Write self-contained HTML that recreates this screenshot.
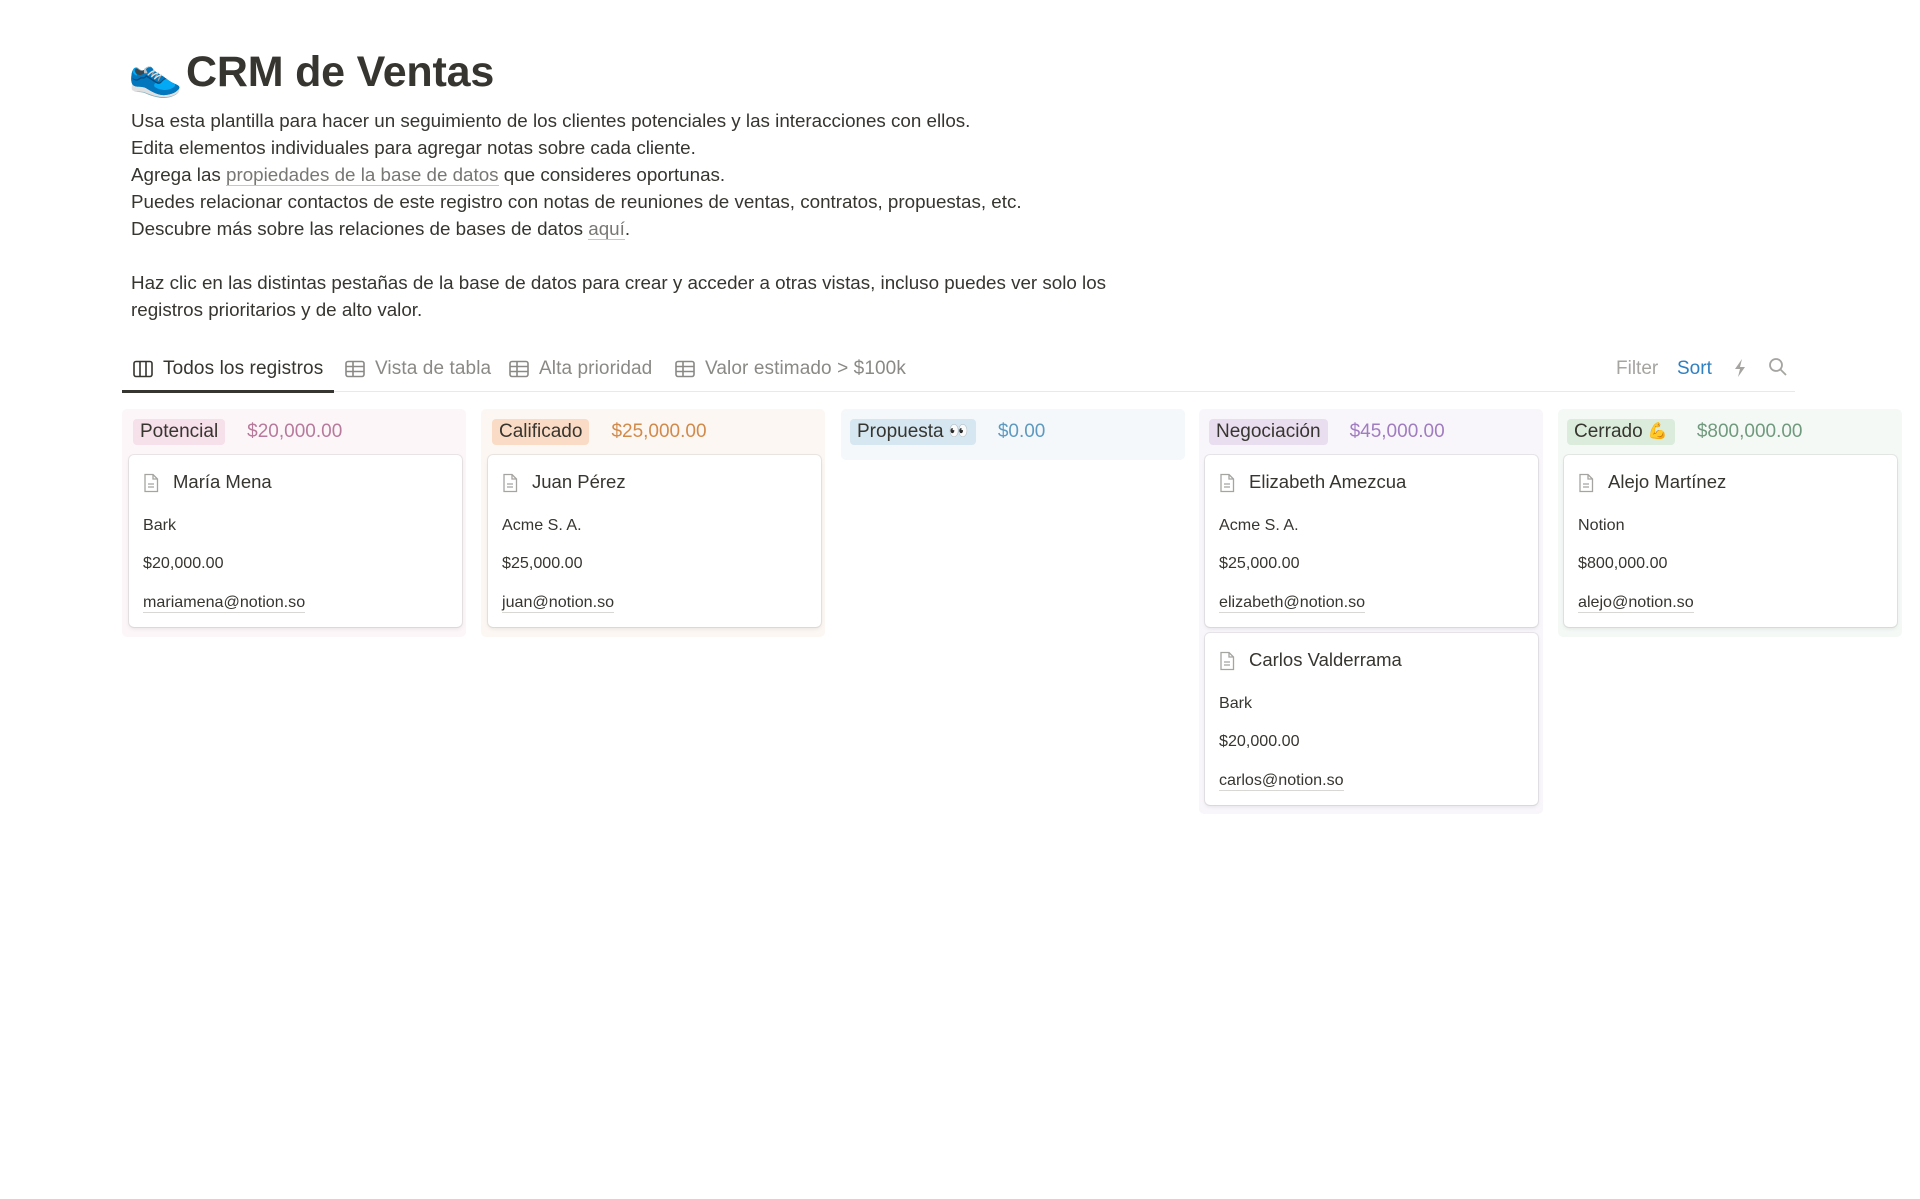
<!DOCTYPE html>
<html><head><meta charset="utf-8"><style>
*{margin:0;padding:0;box-sizing:border-box}
body{width:1920px;height:1199px;background:#fff;font-family:"Liberation Sans","Noto Sans CJK JP",sans-serif;color:#37352f;position:relative;overflow:hidden}
.a{position:absolute;white-space:nowrap}
h1{position:absolute;left:186px;top:48px;font-size:43px;font-weight:bold;color:#37352f;letter-spacing:-0.2px}
.p{position:absolute;left:131px;font-size:18.8px;line-height:27px}
.lk{color:#787774;border-bottom:1px solid #c8c7c4}
.tab{position:absolute;top:358px;font-size:19px;letter-spacing:0.1px;color:#8a8985;display:flex;align-items:center;gap:10px}
.col{position:absolute;top:409px;width:344px;border-radius:5px}
.hd{position:absolute;top:419px;height:26px;display:flex;align-items:center;gap:22px;font-size:19px;line-height:26px}
.tag{display:inline-block;height:26px;line-height:26px;padding:0 7px;border-radius:4px;color:#37352f;overflow:hidden}
.e{font-size:16px;line-height:26px;vertical-align:top}
.card{position:absolute;width:333px;height:172px;background:#fff;border-radius:5px;box-shadow:0 0 0 1px rgba(15,15,15,.07),0 2px 4px rgba(15,15,15,.08)}
.card .t{position:absolute;left:44px;top:16px;font-size:18.5px;color:#37352f}
.card .ic{position:absolute;left:14px;top:18px}
.card .r{position:absolute;left:14px;font-size:16.1px;color:#37352f}
.em{border-bottom:1px solid #d8d7d4}
</style></head><body>
<div class="a" style="left:128px;top:48px;font-size:44px">👟</div>
<h1>CRM de Ventas</h1>
<div class="p" style="top:107px">Usa esta plantilla para hacer un seguimiento de los clientes potenciales y las interacciones con ellos.<br>Edita elementos individuales para agregar notas sobre cada cliente.<br>Agrega las <span class="lk">propiedades de la base de datos</span> que consideres oportunas.<br>Puedes relacionar contactos de este registro con notas de reuniones de ventas, contratos, propuestas, etc.<br>Descubre más sobre las relaciones de bases de datos <span class="lk">aquí</span>.<br><br>Haz clic en las distintas pestañas de la base de datos para crear y acceder a otras vistas, incluso puedes ver solo los<br>registros prioritarios y de alto valor.</div>

<div class="tab" style="left:133px;color:#37352f"><svg width="20" height="18" viewBox="0 0 20 18"><rect x="1" y="1.5" width="18" height="15" rx="2" fill="none" stroke="#37352f" stroke-width="1.6"/><path d="M7 2v14M13 2v14" stroke="#37352f" stroke-width="1.6"/></svg>Todos los registros</div>
<div class="tab" style="left:345px"><svg width="20" height="18" viewBox="0 0 20 18"><rect x="1" y="1.5" width="18" height="15" rx="2" fill="none" stroke="#8a8985" stroke-width="1.6"/><path d="M1 6.5h18M1 11.5h18M8 2v14" stroke="#8a8985" stroke-width="1.6"/></svg>Vista de tabla</div>
<div class="tab" style="left:509px"><svg width="20" height="18" viewBox="0 0 20 18"><rect x="1" y="1.5" width="18" height="15" rx="2" fill="none" stroke="#8a8985" stroke-width="1.6"/><path d="M1 6.5h18M1 11.5h18M8 2v14" stroke="#8a8985" stroke-width="1.6"/></svg>Alta prioridad</div>
<div class="tab" style="left:675px"><svg width="20" height="18" viewBox="0 0 20 18"><rect x="1" y="1.5" width="18" height="15" rx="2" fill="none" stroke="#8a8985" stroke-width="1.6"/><path d="M1 6.5h18M1 11.5h18M8 2v14" stroke="#8a8985" stroke-width="1.6"/></svg>Valor estimado &gt; $100k</div>
<div class="a" style="left:122px;top:391px;width:1673px;height:1px;background:#e9e9e7"></div>
<div class="a" style="left:122px;top:390px;width:212px;height:3px;background:#37352f"></div>
<div class="a" style="left:1616px;top:358px;font-size:19px;color:#a5a4a0">Filter</div>
<div class="a" style="left:1677px;top:358px;font-size:19px;color:#2f80c2">Sort</div>
<svg class="a" style="left:1732px;top:358px" width="16" height="20" viewBox="0 0 16 20"><path d="M10 1L3 11h5l-2 8 7-10H8z" fill="#a5a4a0"/></svg>
<svg class="a" style="left:1768px;top:357px" width="20" height="20" viewBox="0 0 20 20"><circle cx="8" cy="8" r="6" fill="none" stroke="#a5a4a0" stroke-width="1.8"/><path d="M12.5 12.5L18 18" stroke="#a5a4a0" stroke-width="1.8"/></svg>

<div class="col" style="left:122px;height:228px;background:#fcf6f9"></div>
<div class="col" style="left:481px;height:228px;background:#fcf7f2"></div>
<div class="col" style="left:841px;height:51px;background:#f4f8fb"></div>
<div class="col" style="left:1199px;height:405px;background:#f9f6fb"></div>
<div class="col" style="left:1558px;height:228px;background:#f5f9f6"></div>

<div class="hd" style="left:133px"><span class="tag" style="background:#f6e0ea">Potencial</span><span style="color:#b77a9b">$20,000.00</span></div>
<div class="hd" style="left:492px"><span class="tag" style="background:#fadcc6">Calificado</span><span style="color:#d28a4a">$25,000.00</span></div>
<div class="hd" style="left:850px"><span class="tag" style="background:#d6e7f1">Propuesta <span class="e">👀</span></span><span style="color:#5e9ac0">$0.00</span></div>
<div class="hd" style="left:1209px"><span class="tag" style="background:#e9def0">Negociación</span><span style="color:#a07cc0">$45,000.00</span></div>
<div class="hd" style="left:1567px"><span class="tag" style="background:#dbecdc">Cerrado <span class="e">💪</span></span><span style="color:#709a7d">$800,000.00</span></div>

<svg width="0" height="0" style="position:absolute"><defs><symbol id="doc" viewBox="0 0 16 20"><path d="M2 1.5h8l4.5 4.5v12.5h-12.5z M10 1.5v4.5h4.5 M5 11h6 M5 14h6" fill="none" stroke="#a5a4a0" stroke-width="1.3"/></symbol></defs></svg>

<div class="card" style="left:129px;top:455px"><svg class="ic" width="16" height="20"><use href="#doc"/></svg><div class="t">María Mena</div><div class="r" style="top:61px">Bark</div><div class="r" style="top:99px">$20,000.00</div><div class="r em" style="top:138px">mariamena@notion.so</div></div>
<div class="card" style="left:488px;top:455px"><svg class="ic" width="16" height="20"><use href="#doc"/></svg><div class="t">Juan Pérez</div><div class="r" style="top:61px">Acme S. A.</div><div class="r" style="top:99px">$25,000.00</div><div class="r em" style="top:138px">juan@notion.so</div></div>
<div class="card" style="left:1205px;top:455px"><svg class="ic" width="16" height="20"><use href="#doc"/></svg><div class="t">Elizabeth Amezcua</div><div class="r" style="top:61px">Acme S. A.</div><div class="r" style="top:99px">$25,000.00</div><div class="r em" style="top:138px">elizabeth@notion.so</div></div>
<div class="card" style="left:1205px;top:633px"><svg class="ic" width="16" height="20"><use href="#doc"/></svg><div class="t">Carlos Valderrama</div><div class="r" style="top:61px">Bark</div><div class="r" style="top:99px">$20,000.00</div><div class="r em" style="top:138px">carlos@notion.so</div></div>
<div class="card" style="left:1564px;top:455px"><svg class="ic" width="16" height="20"><use href="#doc"/></svg><div class="t">Alejo Martínez</div><div class="r" style="top:61px">Notion</div><div class="r" style="top:99px">$800,000.00</div><div class="r em" style="top:138px">alejo@notion.so</div></div>
</body></html>
